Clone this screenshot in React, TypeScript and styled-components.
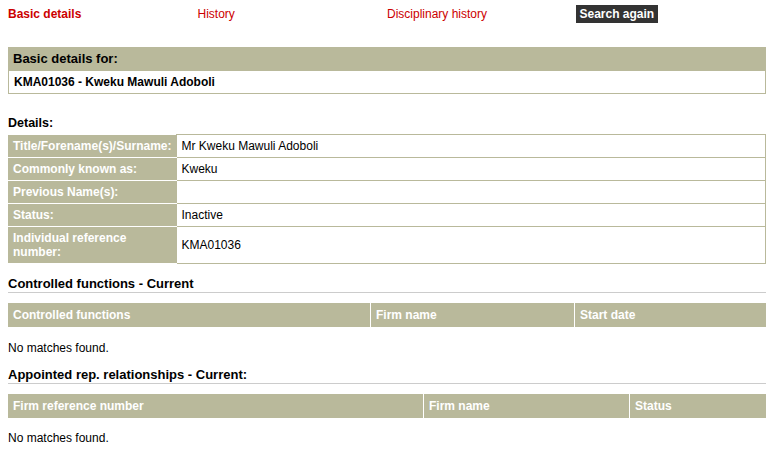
import React from "react";
import styled, { createGlobalStyle } from "styled-components";

const khaki = "#b9b99b";
const red = "#cc0000";

const GlobalStyle = createGlobalStyle`
  body {
    margin: 0;
    background: #ffffff;
    color: #000000;
    font-family: "Liberation Sans", Arial, sans-serif;
    font-size: 12px;
  }
`;

const Page = styled.div`
  width: 758px;
  padding: 5px 8px 10px;
`;

const Nav = styled.nav`
  display: grid;
  grid-template-columns: repeat(4, 1fr);
  align-items: center;
  height: 18px;
`;

const NavLink = styled.a<{ $active?: boolean }>`
  color: ${red};
  font-weight: ${(p) => (p.$active ? "bold" : "normal")};
  line-height: 18px;
  text-decoration: none;
`;

const SearchButton = styled.a`
  justify-self: start;
  margin-left: -1px;
  padding: 0 4px;
  background: #333333;
  color: #ffffff;
  font-weight: bold;
  line-height: 18px;
  text-decoration: none;
`;

const SummaryBox = styled.section`
  margin-top: 24px;
  border: 1px solid ${khaki};
  border-top: none;
`;

const SummaryHead = styled.div`
  margin: 0 -1px;
  padding: 4px 5px;
  background: ${khaki};
  font-size: 13px;
  font-weight: bold;
  line-height: 16px;
`;

const SummaryBody = styled.div`
  padding: 4px 5px;
  font-weight: bold;
  line-height: 14px;
`;

const Heading = styled.h3<{ $rule?: boolean; $top: number }>`
  margin: ${(p) => p.$top}px 0 0;
  font-size: ${(p) => (p.$rule ? 13 : 12.5)}px;
  font-weight: bold;
  line-height: 16px;
  border-bottom: ${(p) => (p.$rule ? "1px solid #cccccc" : "none")};
`;

const DetailTable = styled.table`
  width: 100%;
  margin-top: 3px;
  border-collapse: collapse;
`;

const Label = styled.th`
  width: 158px;
  padding: 4px 5px;
  background: ${khaki};
  border-bottom: 1px solid #ffffff;
  color: #ffffff;
  font-weight: bold;
  line-height: 14px;
  text-align: left;
  vertical-align: middle;
`;

const Value = styled.td`
  padding: 4px 4px;
  border: 1px solid ${khaki};
  line-height: 14px;
  vertical-align: middle;
`;

const HeaderRow = styled.div<{ $cols: string }>`
  display: grid;
  grid-template-columns: ${(p) => p.$cols};
  column-gap: 1px;
  margin-top: 10px;
`;

const HeaderCell = styled.div`
  padding: 5px 5px;
  background: ${khaki};
  color: #ffffff;
  font-weight: bold;
  line-height: 14px;
`;

const Empty = styled.p<{ $top: number }>`
  margin: ${(p) => p.$top}px 0 0;
  line-height: 14px;
`;

const details: [string, string][] = [
  ["Title/Forename(s)/Surname:", "Mr Kweku Mawuli Adoboli"],
  ["Commonly known as:", "Kweku"],
  ["Previous Name(s):", ""],
  ["Status:", "Inactive"],
  ["Individual reference number:", "KMA01036"],
];

export default function App() {
  return (
    <Page>
      <GlobalStyle />
      <Nav>
        <NavLink $active>Basic details</NavLink>
        <NavLink>History</NavLink>
        <NavLink>Disciplinary history</NavLink>
        <SearchButton>Search again</SearchButton>
      </Nav>

      <SummaryBox>
        <SummaryHead>Basic details for:</SummaryHead>
        <SummaryBody>KMA01036 - Kweku Mawuli Adoboli</SummaryBody>
      </SummaryBox>

      <Heading $top={21}>Details:</Heading>
      <DetailTable>
        <tbody>
          {details.map(([label, value]) => (
            <tr key={label}>
              <Label>{label}</Label>
              <Value>{value}</Value>
            </tr>
          ))}
        </tbody>
      </DetailTable>

      <Heading $rule $top={12}>Controlled functions - Current</Heading>
      <HeaderRow $cols="362px 203px 1fr">
        <HeaderCell>Controlled functions</HeaderCell>
        <HeaderCell>Firm name</HeaderCell>
        <HeaderCell>Start date</HeaderCell>
      </HeaderRow>
      <Empty $top={14}>No matches found.</Empty>

      <Heading $rule $top={12}>Appointed rep. relationships - Current:</Heading>
      <HeaderRow $cols="415px 205px 1fr">
        <HeaderCell>Firm reference number</HeaderCell>
        <HeaderCell>Firm name</HeaderCell>
        <HeaderCell>Status</HeaderCell>
      </HeaderRow>
      <Empty $top={13}>No matches found.</Empty>
    </Page>
  );
}
